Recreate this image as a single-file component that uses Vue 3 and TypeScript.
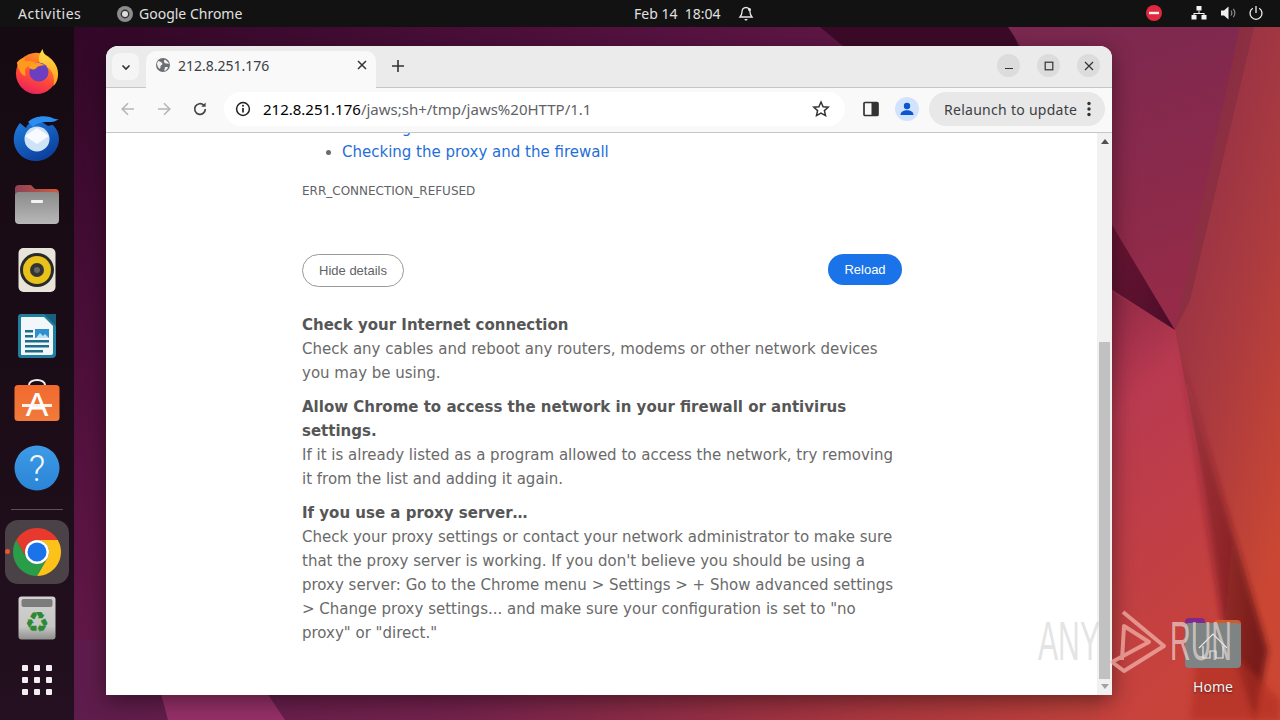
<script setup lang="ts">
interface Help { title: string; body: string }
const helps: Help[] = [
  { title: 'Check your Internet connection', body: 'Check any cables and reboot any routers, modems or other network devices you may be using.' },
  { title: 'Allow Chrome to access the network in your firewall or antivirus settings.', body: 'If it is already listed as a program allowed to access the network, try removing it from the list and adding it again.' },
  { title: 'If you use a proxy server…', body: 'Check your proxy settings or contact your network administrator to make sure that the proxy server is working. If you don\'t believe you should be using a proxy server: Go to the Chrome menu > Settings > + Show advanced settings > Change proxy settings... and make sure your configuration is set to "no proxy" or "direct."' },
]
</script>

<template>
  <div class="desktop">
    <svg class="wallpaper" width="1280" height="720" viewBox="0 0 1280 720">
      <defs>
        <linearGradient id="wpBase" x1="0" y1="0" x2="1" y2="0.75">
          <stop offset="0" stop-color="#2a0522" />
          <stop offset="0.35" stop-color="#561240" />
          <stop offset="0.6" stop-color="#6e1f4c" />
          <stop offset="0.85" stop-color="#b23a46" />
          <stop offset="1" stop-color="#c94a36" />
        </linearGradient>
        <linearGradient id="wpTopRight" x1="0" y1="0" x2="0.3" y2="1">
          <stop offset="0" stop-color="#7a2850" />
          <stop offset="1" stop-color="#952b48" />
        </linearGradient>
        <linearGradient id="wpRight" x1="0" y1="0" x2="0.55" y2="1">
          <stop offset="0" stop-color="#8a2c4a" />
          <stop offset="0.55" stop-color="#a93a40" />
          <stop offset="1" stop-color="#cb4733" />
        </linearGradient>
        <linearGradient id="wpLower" x1="0" y1="0" x2="0.3" y2="1">
          <stop offset="0" stop-color="#8a2646" />
          <stop offset="0.3" stop-color="#b93a50" />
          <stop offset="1" stop-color="#c8433a" />
        </linearGradient>
        <linearGradient id="wpFold" x1="0" y1="0" x2="1" y2="0.3">
          <stop offset="0" stop-color="#7a1a30" stop-opacity="0.15" />
          <stop offset="1" stop-color="#701616" stop-opacity="0.9" />
        </linearGradient>
        <linearGradient id="wpDark" x1="1" y1="1" x2="0" y2="0.6">
          <stop offset="0" stop-color="#4a0c28" />
          <stop offset="1" stop-color="#6a1634" />
        </linearGradient>
        <linearGradient id="wpBottom" x1="0" y1="0" x2="1" y2="0">
          <stop offset="0" stop-color="#5e1c4c" />
          <stop offset="0.35" stop-color="#74224c" />
          <stop offset="0.7" stop-color="#a8363f" />
          <stop offset="1" stop-color="#c9463a" />
        </linearGradient>
        <filter id="wpSoft"><feGaussianBlur stdDeviation="3" /></filter>
      </defs>
      <rect width="1280" height="720" fill="url(#wpBase)" />
      <rect x="74" y="640" width="1110" height="80" fill="url(#wpBottom)" />
      <polygon points="820,27 1010,27 1025,60 860,60" fill="#3c0a28" />
      <polygon points="1008,27 1280,27 1280,300 1175,330 1112,225 1030,60" fill="url(#wpTopRight)" />
      <polygon points="1240,27 1280,27 1280,720 1250,720 1175,330" fill="url(#wpRight)" />
      <polygon points="1100,285 1175,330 1250,720 1100,720" fill="url(#wpLower)" />
      <polygon points="1178,345 1268,650 1255,720 1222,620" fill="url(#wpFold)" filter="url(#wpSoft)" />
      <polygon points="1100,205 1175,330 1100,282" fill="url(#wpDark)" />
      <polygon points="1240,27 1175,330 1190,300 1254,27" fill="#7c2a40" opacity="0.5" />
      <polygon points="1200,620 1280,700 1280,720 1190,720" fill="#b02f20" opacity="0.6" filter="url(#wpSoft)" />
      <polygon points="160,690 265,690 285,720 168,720" fill="#963068" />
    </svg>

    <header class="topbar">
      <span class="activities">Activities</span>
      <span class="app-menu">
        <svg width="16" height="16" viewBox="0 0 16 16"><circle cx="8" cy="8" r="8" fill="#8c8c8c" /><circle cx="8" cy="8" r="4.4" fill="#333" /><circle cx="8" cy="8" r="3" fill="#ddd" /></svg>
        Google Chrome
      </span>
      <span class="clock">
        <span>Feb 14&nbsp;&nbsp;18:04</span>
        <svg width="16" height="16" viewBox="0 0 16 16" fill="none" stroke="#e6e6e6" stroke-width="1.3"><path d="M8 1.5c-2.6 0-4 2-4 4.2 0 3-1.2 4.4-2 5.3h12c-.8-.9-2-2.3-2-5.3 0-2.2-1.4-4.2-4-4.2z" /><path d="M6.5 13h3c0 1-.7 1.6-1.5 1.6s-1.500-.6-1.500-1.600z" fill="#e6e6e6" stroke="none" /><circle cx="11.500" cy="3.500" r="1.500" fill="#e6e6e6" stroke="none" /></svg>
      </span>
      <span class="tray">
        <svg class="dnd" width="16" height="16" viewBox="0 0 16 16"><circle cx="8" cy="8" r="8" fill="#e0283f" /><rect x="3" y="6.800" width="10" height="2.400" fill="#f3f3f3" /></svg>
        <svg class="net" width="16" height="14" viewBox="0 0 16 14" fill="#f4f4f4"><rect x="5.500" y="0" width="5" height="4.500" /><rect x="0.500" y="9" width="5" height="4.500" /><rect x="10.500" y="9" width="5" height="4.500" /><path d="M7.500 4.500h1v2.500h5v2h-1v-1h-9v1h-1v-2h5z" /></svg>
        <svg class="vol" width="16" height="16" viewBox="0 0 16 16" fill="none"><path d="M1 5.500h3l4.500-4v13l-4.500-4h-3z" fill="#f0f0f0" /><path d="M11 5.500c1 1.500 1 3.500 0 5M13.300 3.800c1.800 2.500 1.800 6 0 8.400" stroke="#8c8c8c" stroke-width="1.200" /></svg>
        <svg class="pow" width="16" height="16" viewBox="0 0 16 16" fill="none" stroke="#eee" stroke-width="1.300"><path d="M8 1v7" /><path d="M4.800 3.200a6 6 0 1 0 6.400 0" /></svg>
      </span>
    </header>

    <nav class="dock">
      <div class="slot">
        <svg class="ff" width="46" height="46" viewBox="0 0 48 48">
          <defs>
            <linearGradient id="ffBody" x1="0.700" y1="0" x2="0.300" y2="1"><stop offset="0" stop-color="#ff9a1f" /><stop offset="0.600" stop-color="#ff4a38" /><stop offset="1" stop-color="#e8205e" /></linearGradient>
            <linearGradient id="ffFlame" x1="0.500" y1="0" x2="0.500" y2="1"><stop offset="0" stop-color="#ffe14a" /><stop offset="1" stop-color="#ff9a1a" /></linearGradient>
          </defs>
          <circle cx="23.500" cy="26.500" r="21.500" fill="url(#ffBody)" />
          <path d="M30 1c0 6 6 8 10 12 4 4 6 9 6 14 0 6-2 10-5 13 2-8 0-15-5-19-3-2-7-2-9-5-2-4-1-10 3-15z" fill="url(#ffFlame)" />
          <path d="M3 15c3-3 6-5 9-5-1 2-1 3 0 4 4-1 8 0 12 2-3 3-6 2-9 3-3 1-4 5-3 8 1 5-7 0-9-12z" fill="#ff9a1e" />
          <circle cx="26" cy="25" r="10" fill="#6b3fc0" />
          <path d="M15 19c4-3 11-5 17-1-4 0-7 1-9 3s-6 2-8-2z" fill="#ffa01e" />
        </svg>
      </div>
      <div class="slot">
        <svg width="50" height="48" viewBox="0 0 50 48">
          <defs><linearGradient id="tbBody" x1="0" y1="0" x2="0.600" y2="1"><stop offset="0" stop-color="#1f7ee0" /><stop offset="1" stop-color="#0c3f9c" /></linearGradient></defs>
          <path d="M8 9c-5 6-7 13-6 20 2 11 11 18 22 18 12 0 22-9 23-21 0-6-2-11-6-15-3 0-4 1-5 1-5-4-11-6-16-4-3 1-5 3-6 6-2-2-4-3-6-5z" fill="url(#tbBody)" />
          <path d="M16 8c5-5 14-7 22-5 3 1 6 3 9 2-3 2-5 3-8 3-7 0-13 0-18 5z" fill="#2b8df0" />
          <circle cx="25" cy="25" r="12.500" fill="#cfe3f7" />
          <path d="M13 22l12-8 12 8-12 8z" fill="#f7fbff" />
        </svg>
      </div>
      <div class="slot">
        <svg width="46" height="42" viewBox="0 0 46 42">
          <defs>
            <linearGradient id="foTop" x1="0" y1="0" x2="1" y2="0"><stop offset="0" stop-color="#8e4258" /><stop offset="1" stop-color="#d55a3c" /></linearGradient>
            <linearGradient id="foBody" x1="0" y1="0" x2="0" y2="1"><stop offset="0" stop-color="#8a8a8a" /><stop offset="1" stop-color="#b8b8b8" /></linearGradient>
          </defs>
          <path d="M1 6a4 4 0 0 1 4-4h12l4 4h20a4 4 0 0 1 4 4v8h-44z" fill="url(#foTop)" />
          <rect x="1" y="9" width="44" height="32" rx="4" fill="url(#foBody)" />
          <rect x="17" y="17" width="12" height="3" rx="1" fill="#f2f2f2" />
        </svg>
      </div>
      <div class="slot">
        <svg width="38" height="46" viewBox="0 0 38 46">
          <rect x="0.500" y="1" width="37" height="44" rx="5" fill="#e8e4da" />
          <circle cx="19" cy="23" r="17" fill="#2a2a2a" />
          <circle cx="19" cy="23" r="14" fill="#e8c11a" />
          <circle cx="19" cy="23" r="7" fill="#333" />
          <circle cx="19" cy="23" r="3" fill="#666" />
        </svg>
      </div>
      <div class="slot">
        <svg width="38" height="46" viewBox="0 0 38 46">
          <path d="M3 1h24l11 11v29a4 4 0 0 1-4 4h-31a3 3 0 0 1-3-3v-38a3 3 0 0 1 3-3z" fill="#1f7f9e" />
          <path d="M4 4h22l9 9v27a2 2 0 0 1-2 2h-29a1 1 0 0 1-1-1v-36a1 1 0 0 1 1-1z" fill="#f4f7f9" />
          <path d="M26 1l12 12v-12z" fill="#1a5f7c" />
          <rect x="7" y="17" width="8" height="2.500" fill="#1f6d8a" /><rect x="7" y="22" width="8" height="2.500" fill="#1f6d8a" />
          <rect x="7" y="27" width="24" height="2.500" fill="#1f6d8a" /><rect x="7" y="32" width="24" height="2.500" fill="#1f6d8a" /><rect x="7" y="37" width="18" height="2.500" fill="#1f6d8a" />
          <rect x="17" y="16" width="14" height="9" fill="#2f8fd0" />
          <path d="M18 25l4-5 3 3 2-2 4 4z" fill="#bfe0f5" />
        </svg>
      </div>
      <div class="slot">
        <svg width="46" height="46" viewBox="0 3 46 46">
          <defs><linearGradient id="asBody" x1="0" y1="0" x2="0" y2="1"><stop offset="0" stop-color="#f26a2e" /><stop offset="1" stop-color="#f07a3c" /></linearGradient></defs>
          <path d="M15 10v-1a8 5 0 0 1 16 0v1" fill="none" stroke="#eee" stroke-width="2" />
          <rect x="0.500" y="9" width="45" height="36" rx="3.500" fill="url(#asBody)" />
          <text x="23" y="40" text-anchor="middle" class="as-a">A</text>
          <rect x="8" y="28" width="30" height="3" fill="#fff" opacity="0.900" />
        </svg>
      </div>
      <div class="slot">
        <svg width="46" height="46" viewBox="0 0 46 46">
          <defs><linearGradient id="hpBody" x1="0" y1="0" x2="0" y2="1"><stop offset="0" stop-color="#3d9be6" /><stop offset="1" stop-color="#2a85d6" /></linearGradient></defs>
          <circle cx="23" cy="23" r="22.500" fill="url(#hpBody)" />
          <text x="23" y="36" text-anchor="middle" class="hp-q">?</text>
        </svg>
      </div>
      <div class="dock-sep"></div>
      <div class="slot">
        <span class="running"></span>
        <span class="active-tile">
          <svg width="48" height="48" viewBox="0 0 48 48">
            <path d="M24 12H44.780A24 24 0 0 0 3.220 12L13.600 30A12 12 0 0 1 24 12z" fill="#e8392e" />
            <path d="M44.780 12A24 24 0 0 1 24 48L34.400 30A12 12 0 0 0 24 12z" fill="#fcc21a" />
            <path d="M3.220 12A24 24 0 0 0 24 48L34.400 30A12 12 0 0 1 13.600 30z" fill="#2a9d48" />
            <circle cx="24" cy="24" r="12" fill="#fff" />
            <circle cx="24" cy="24" r="9.500" fill="#1a73e8" />
          </svg>
        </span>
      </div>
      <div class="slot">
        <svg width="38" height="44" viewBox="0 0 38 44">
          <defs><linearGradient id="trBody" x1="0" y1="0" x2="0" y2="1"><stop offset="0" stop-color="#d2d2d0" /><stop offset="0.700" stop-color="#c6c6c4" /><stop offset="1" stop-color="#8f8f8d" /></linearGradient></defs>
          <rect x="0.500" y="0.500" width="37" height="43" rx="3" fill="url(#trBody)" />
          <rect x="3.500" y="3" width="31" height="8" rx="2" fill="#7c7c7c" />
          <text x="19" y="36" text-anchor="middle" class="tr-sym">♻</text>
        </svg>
      </div>
      <div class="slot slot-last">
        <div class="grid-dots"><i v-for="n in 9" :key="n"></i></div>
      </div>
    </nav>

    <div class="home-icon">
      <svg width="56" height="50" viewBox="0 0 56 50">
        <path d="M30 2h22a4 4 0 0 1 4 4v6h-26z" fill="#d2582e" />
        <path d="M0 4a4 4 0 0 1 4-4h12a4 4 0 0 1 4 4v6h-20z" fill="#7d2a8c" />
        <rect y="5" width="56" height="45" rx="4" fill="#7e8383" />
        <path d="M14 30l14-14 14 14M18 28v12h7v-7h6v7h7v-12" fill="none" stroke="#e8e8e8" stroke-width="1.200" />
      </svg>
      <span class="home-label">Home</span>
    </div>

    <section class="window">
      <div class="tabstrip">
        <span class="tab-search">
          <svg width="12" height="12" viewBox="0 0 12 12" fill="none" stroke="#333" stroke-width="1.700"><path d="M2.500 4.500l3.500 3.500 3.500-3.500" /></svg>
        </span>
        <div class="tab">
          <svg width="14" height="14" viewBox="0 0 14 14"><circle cx="7" cy="7" r="7" fill="#6b6e72" /><path d="M2 3c2 0 3 1 4 2s0 2-1 2.500 0 2-1 3-3-3-3-5zM9 1.500c1 1 3 2 4 4-1 .5-2 0-3 0s-2-1-2-2 .5-1.500 1-2zM9 9h3c-.5 2-2 3.500-3.500 4-.5-1 .5-3 .5-4z" fill="#f2f2f2" /></svg>
          <span class="tab-title">212.8.251.176</span>
          <svg class="tab-close" width="10" height="10" viewBox="0 0 10 10" stroke="#333" stroke-width="1.500"><path d="M1 1l8 8M9 1l-8 8" /></svg>
        </div>
        <svg class="tab-new" width="12" height="12" viewBox="0 0 12 12" stroke="#333" stroke-width="1.600"><path d="M6 0v12M0 6h12" /></svg>
        <span class="spacer"></span>
        <span class="win-btn"><svg width="10" height="10" viewBox="0 0 10 10" stroke="#333" stroke-width="1.200"><path d="M1 7.500h8" /></svg></span>
        <span class="win-btn"><svg width="10" height="10" viewBox="0 0 10 10" fill="none" stroke="#333" stroke-width="1.200"><rect x="1.200" y="1.200" width="7.600" height="7.600" /></svg></span>
        <span class="win-btn"><svg width="10" height="10" viewBox="0 0 10 10" stroke="#333" stroke-width="1.200"><path d="M1 1l8 8M9 1l-8 8" /></svg></span>
      </div>

      <div class="toolbar">
        <svg class="nav-icon" width="16" height="16" viewBox="0 0 16 16" fill="none" stroke="#b4b6b8" stroke-width="1.600"><path d="M14 8H2.500M8 2.200L2.200 8 8 13.800" /></svg>
        <svg class="nav-icon" width="16" height="16" viewBox="0 0 16 16" fill="none" stroke="#b4b6b8" stroke-width="1.600"><path d="M2 8h11.500M8 2.200L13.800 8 8 13.800" /></svg>
        <svg class="nav-icon" width="16" height="16" viewBox="0 0 16 16" fill="none" stroke="#444" stroke-width="1.700"><path d="M13.300 8a5.300 5.300 0 1 1-1.500-3.700" /><path d="M13.600 1.400v4.400H9.200z" fill="#444" stroke="none" /></svg>
        <div class="omnibox">
          <svg width="16" height="16" viewBox="0 0 16 16" fill="none" stroke="#222" stroke-width="1.500"><circle cx="8" cy="8" r="6.400" /><path d="M8 7v4.500" stroke-width="1.700" /><circle cx="8" cy="4.800" r="1" fill="#222" stroke="none" /></svg>
          <span class="url"><b>212.8.251.176</b><span>/jaws;sh+/tmp/jaws%20HTTP/1.1</span></span>
          <span class="spacer"></span>
          <svg width="18" height="18" viewBox="0 0 18 18" fill="none" stroke="#333" stroke-width="1.500"><path d="M9 2l2.100 4.700 5.100.5-3.800 3.400 1.100 5L9 13l-4.500 2.600 1.100-5L1.800 7.200l5.100-.5z" /></svg>
        </div>
        <svg class="side-panel" width="16" height="16" viewBox="0 0 16 16"><rect x="1" y="1.500" width="14" height="13" rx="1" fill="none" stroke="#333" stroke-width="1.700" /><rect x="8.500" y="1.500" width="6.500" height="13" fill="#333" /></svg>
        <span class="avatar">
          <svg width="16" height="16" viewBox="0 0 16 16" fill="#0b57d0"><circle cx="8" cy="5" r="3.200" /><path d="M1.500 14c0-3.200 3-4.800 6.500-4.800s6.500 1.600 6.500 4.800z" /></svg>
        </span>
        <div class="relaunch">
          <span>Relaunch to update</span>
          <svg width="4" height="16" viewBox="0 0 4 16" fill="#333"><circle cx="2" cy="2.500" r="1.700" /><circle cx="2" cy="8" r="1.700" /><circle cx="2" cy="13.500" r="1.700" /></svg>
        </div>
      </div>

      <div class="viewport">
        <main class="page">
          <div class="column">
            <ul class="suggestions">
              <li><a>Checking the connection</a></li>
              <li><a>Checking the proxy and the firewall</a></li>
            </ul>
            <div class="err-code">ERR_CONNECTION_REFUSED</div>
            <div class="actions">
              <button class="btn-details">Hide details</button>
              <button class="btn-reload">Reload</button>
            </div>
            <div v-for="h in helps" :key="h.title" class="help">
              <div class="help-title">{{ h.title }}</div>
              <div class="help-body">{{ h.body }}</div>
            </div>
          </div>
        </main>
        <aside class="scrollbar">
          <span class="arrow-up"></span>
          <span class="thumb-gap"></span>
          <span class="thumb"></span>
          <span class="arrow-down"></span>
        </aside>
      </div>
    </section>

    <svg class="watermark" width="230" height="80" viewBox="0 0 230 80">
      <text x="2" y="54" textLength="62" lengthAdjust="spacingAndGlyphs" class="wm-text wm-any">ANY</text>
      <path d="M87 6L128 40 88 65 76 56 113 36 88 20 86 54" fill="none" stroke="#f3b8ae" stroke-opacity="0.700" stroke-width="4" stroke-linejoin="round" />
      <text x="134" y="54" textLength="62" lengthAdjust="spacingAndGlyphs" class="wm-text wm-run">RUN</text>
    </svg>
  </div>
</template>

<style>
html, body { margin: 0; padding: 0; background: #111; }
</style>

<style scoped>
.desktop {
  position: relative;
  width: 1280px;
  height: 720px;
  overflow: hidden;
  font-family: "Noto Sans", "Open Sans", sans-serif;
}
.wallpaper { position: absolute; inset: 0; }
.topbar {
  position: relative;
  display: flex;
  align-items: center;
  height: 27px;
  background: #121212;
  color: #e0e0e0;
  font-size: 14px;
  padding-left: 18px;
}
.activities { width: 99px; letter-spacing: 0.5px; }
.app-menu { display: flex; align-items: center; gap: 6px; width: 517px; }
.clock { display: flex; align-items: center; gap: 17px; width: 400px; }
.tray { position: relative; flex: 1; height: 27px; }
.tray svg { position: absolute; top: 5px; }
.dnd { left: 112px; }
.net { left: 157px; top: 6px !important; }
.vol { left: 186px; }
.pow { left: 214px; }
.dock {
  position: absolute;
  left: 0;
  top: 27px;
  bottom: 0;
  width: 74px;
  padding-top: 12px;
  box-sizing: border-box;
  background: linear-gradient(180deg, #150a12 0%, #1c0d18 60%, #241020 100%);
  display: flex;
  flex-direction: column;
  align-items: center;
}
.slot {
  position: relative;
  height: 66px;
  width: 74px;
  flex: none;
  display: flex;
  align-items: center;
  justify-content: center;
}
.slot-last { height: 58px; }
.ff { margin-top: -2px; }
.dock-sep {
  width: 52px;
  height: 1px;
  flex: none;
  margin: 8px 0 9px;
  background: #5b5257;
}
.active-tile {
  width: 64px;
  height: 64px;
  border-radius: 13px;
  background: #4a4246;
  display: flex;
  align-items: center;
  justify-content: center;
}
.running {
  position: absolute;
  left: 5px;
  top: 30px;
  width: 5px;
  height: 5px;
  border-radius: 50%;
  background: #e9552c;
}
.grid-dots {
  display: grid;
  grid-template-columns: repeat(3, 6px);
  grid-auto-rows: 6px;
  gap: 6px;
}
.grid-dots i { background: #f4eef2; border-radius: 1px; }
.as-a { font: 400 34px "Liberation Sans", sans-serif; fill: #fff; }
.hp-q { font: 300 36px Roboto, sans-serif; fill: #f4f8fc; }
.tr-sym { font: 400 28px "DejaVu Sans", sans-serif; fill: #2d8a32; }
.home-icon {
  position: absolute;
  left: 1173px;
  top: 618px;
  width: 80px;
  display: flex;
  flex-direction: column;
  align-items: center;
}
.home-label {
  margin-top: 9px;
  font-size: 14px;
  color: #f6f2f0;
  text-shadow: 0 1px 2px rgba(0, 0, 0, 0.5);
}
.window {
  position: absolute;
  left: 106px;
  top: 46px;
  width: 1006px;
  height: 649px;
  border-radius: 12px 12px 0 0;
  background: #fff;
  box-shadow: 0 6px 22px rgba(0, 0, 0, 0.45);
  display: flex;
  flex-direction: column;
  overflow: hidden;
}
.tabstrip {
  height: 42px;
  flex: none;
  box-sizing: border-box;
  display: flex;
  align-items: flex-end;
  padding: 0 12px 0 6px;
  background: #ebebeb;
  border-bottom: 1px solid #c6c6c6;
  position: relative;
}
.tab-search {
  width: 27px;
  height: 27px;
  margin-bottom: 7px;
  border-radius: 8px;
  background: #f5f5f5;
  display: flex;
  align-items: center;
  justify-content: center;
}
.tab {
  width: 230px;
  height: 37px;
  margin: 0 0 -1px 7px;
  box-sizing: border-box;
  padding: 0 9px 9px 10px;
  border-radius: 10px 10px 0 0;
  background: #f9f9f9;
  display: flex;
  align-items: center;
  position: relative;
}
.tab-title {
  margin-left: 8px;
  flex: 1;
  font-size: 14px;
  color: #3c4043;
}
.tab-new { margin: 0 0 15px 16px; align-self: flex-end; }
.spacer { flex: 1; }
.win-btn {
  width: 23px;
  height: 23px;
  margin: 0 0 10px 17px;
  border-radius: 50%;
  background: #dcdcdc;
  display: flex;
  align-items: center;
  justify-content: center;
}
.toolbar {
  height: 45px;
  flex: none;
  box-sizing: border-box;
  display: flex;
  align-items: center;
  padding: 0 7px 2px 14px;
  background: #f9f9f9;
  border-bottom: 1px solid #c6c6c6;
}
.nav-icon { margin-right: 20px; }
.omnibox {
  width: 621px;
  height: 34px;
  margin-left: -4px;
  box-sizing: border-box;
  padding: 0 15px 0 11px;
  border-radius: 17px;
  background: #fff;
  display: flex;
  align-items: center;
}
.url { margin-left: 12px; font-size: 15px; color: #000; white-space: nowrap; }
.url b { font-weight: 400; }
.url span { color: #5f6368; }
.side-panel { margin-left: 18px; }
.avatar {
  width: 24px;
  height: 24px;
  margin-left: 16px;
  border-radius: 50%;
  background: #d3e3fd;
  display: flex;
  align-items: center;
  justify-content: center;
}
.relaunch {
  width: 176px;
  height: 34px;
  margin-left: 10px;
  box-sizing: border-box;
  padding: 0 14px 0 15px;
  border-radius: 17px;
  background: #e8e8e8;
  display: flex;
  align-items: center;
  justify-content: space-between;
  font-size: 14px;
  letter-spacing: 0.28px;
  color: #3c4043;
}
.viewport { flex: 1; display: flex; min-height: 0; }
.page { flex: 1; overflow: hidden; background: #fff; }
.column {
  width: 600px;
  margin: -17px 0 0 196px;
  font-family: "DejaVu Sans", sans-serif;
  font-size: 15px;
  line-height: 24px;
  color: #6a6a6a;
}
.suggestions { margin: 0; padding-left: 40px; }
.suggestions a { color: #1f6fd8; }
.err-code {
  margin-top: 15px;
  font-size: 12px;
  line-height: 24px;
  color: #5f6368;
}
.actions {
  margin-top: 51px;
  display: flex;
  justify-content: space-between;
  align-items: flex-start;
}
.actions button {
  font-family: "Liberation Sans", sans-serif;
  font-size: 13px;
  border-radius: 17px;
  box-sizing: border-box;
  padding: 0;
}
.btn-details {
  width: 102px;
  height: 33px;
  background: #fff;
  border: 1px solid #9a9a9a;
  color: #5f6368;
}
.btn-reload {
  width: 74px;
  height: 31px;
  background: #1a73e8;
  border: 0;
  color: #fff;
}
.help { margin-top: 10px; }
.actions + .help { margin-top: 26px; }
.help-title { font-weight: 700; color: #565656; }
.scrollbar {
  width: 15px;
  flex: none;
  background: #f1f1f1;
  display: flex;
  flex-direction: column;
  align-items: center;
}
.arrow-up {
  margin-top: 6px;
  width: 0;
  height: 0;
  border-left: 4px solid transparent;
  border-right: 4px solid transparent;
  border-bottom: 5px solid #505050;
}
.thumb-gap { height: 198px; flex: none; }
.thumb { width: 11px; flex: 1; background: #c1c1c1; }
.arrow-down {
  margin: 5px 0 6px;
  width: 0;
  height: 0;
  border-left: 4px solid transparent;
  border-right: 4px solid transparent;
  border-top: 5px solid #a3a3a3;
}
.watermark { position: absolute; left: 1036px; top: 606px; }
.wm-text { font-family: "Liberation Sans", sans-serif; font-size: 55px; font-weight: 400; }
.wm-any { fill: rgba(205, 205, 205, 0.55); }
.wm-run { fill: rgba(240, 225, 222, 0.65); }
</style>
